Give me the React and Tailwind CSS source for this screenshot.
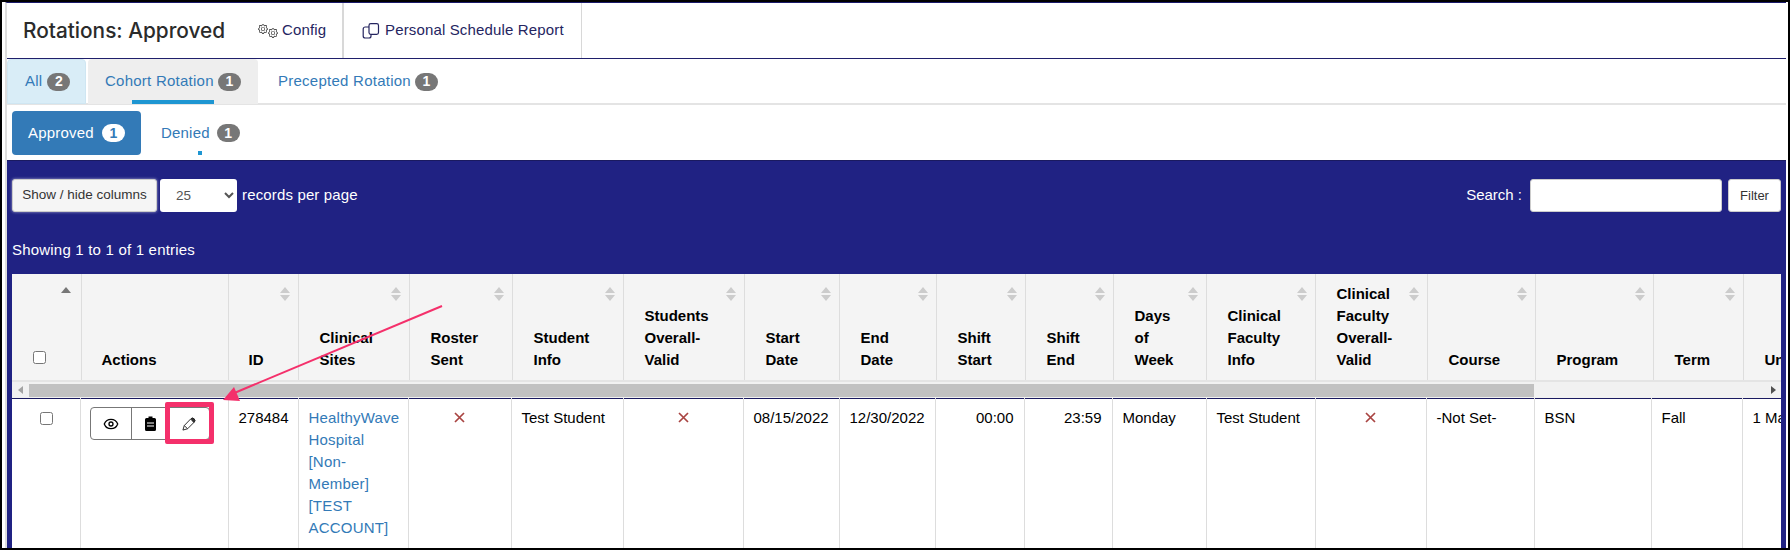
import React from "react";
import { Eye } from "lucide-react";
import { BsGear } from "react-icons/bs";

const headerCols = [
  { width: "w-[69px]", lines: [], checkbox: true },
  { width: "w-[147px]", lines: ["Actions"], noSort: true },
  { width: "w-[70px]", lines: ["ID"] },
  { width: "w-[111px]", lines: ["Clinical", "Sites"] },
  { width: "w-[103px]", lines: ["Roster", "Sent"] },
  { width: "w-[111px]", lines: ["Student", "Info"] },
  { width: "w-[121px]", lines: ["Students", "Overall-", "Valid"] },
  { width: "w-[95px]", lines: ["Start", "Date"] },
  { width: "w-[97px]", lines: ["End", "Date"] },
  { width: "w-[89px]", lines: ["Shift", "Start"] },
  { width: "w-[88px]", lines: ["Shift", "End"] },
  { width: "w-[93px]", lines: ["Days", "of", "Week"] },
  { width: "w-[109px]", lines: ["Clinical", "Faculty", "Info"] },
  { width: "w-[112px]", lines: ["Clinical", "Faculty", "Overall-", "Valid"] },
  { width: "w-[108px]", lines: ["Course"] },
  { width: "w-[118px]", lines: ["Program"] },
  { width: "w-[90px]", lines: ["Term"] },
  { width: "w-[120px]", lines: ["Unit"] },
];

const bodyWidths = [
  "w-[68px]",
  "w-[148px]",
  "w-[70px]",
  "w-[110px]",
  "w-[103px]",
  "w-[112px]",
  "w-[120px]",
  "w-[96px]",
  "w-[96px]",
  "w-[89px]",
  "w-[88px]",
  "w-[94px]",
  "w-[109px]",
  "w-[111px]",
  "w-[108px]",
  "w-[117px]",
  "w-[91px]",
  "w-[120px]",
];

const Badge = ({ children, light }) => (
  <span
    className={`inline-flex h-[18px] w-[23px] items-center justify-center rounded-full text-[14px] font-bold tracking-normal ${
      light ? "bg-white text-[#337ab7]" : "bg-[#777] text-white"
    }`}
  >
    {children}
  </span>
);

const SortIcon = ({ active }) =>
  active ? (
    <svg className="absolute right-[10px] top-[13px] h-[6px] w-[10px]" viewBox="0 0 10 6">
      <path d="M5 0 L10 6 L0 6 Z" fill="#777" />
    </svg>
  ) : (
    <svg className="absolute right-[8px] top-[13px] h-[14px] w-[10px]" viewBox="0 0 10 14">
      <path d="M5 0 L10 6 L0 6 Z M0 8 L10 8 L5 14 Z" fill="#ccc" />
    </svg>
  );

const RemoveMark = () => (
  <svg className="mx-auto mt-[5px] block h-[11px] w-[11px]" viewBox="0 0 11 11">
    <path d="M1 1 L10 10 M10 1 L1 10" stroke="#a94442" strokeWidth="1.7" />
  </svg>
);

const CopyIcon = () => (
  <svg className="h-[16px] w-[18px]" viewBox="0 0 18 16" fill="none" stroke="#25255f" strokeWidth="1.2">
    <rect x="7" y="0.7" width="9.5" height="10.6" rx="1.8" />
    <path d="M7 4 H3.2 A2 2 0 0 0 1.2 6 V13 A2 2 0 0 0 3.2 15 H7 A2 2 0 0 0 9 13 V11.5" />
  </svg>
);

const ClipboardIcon = () => (
  <svg className="h-[15px] w-[11px]" viewBox="0 0 11 15">
    <path
      d="M3.5 0.5 H7.5 V2 H9.5 A1.5 1.5 0 0 1 11 3.5 V13.5 A1.5 1.5 0 0 1 9.5 15 H1.5 A1.5 1.5 0 0 1 0 13.5 V3.5 A1.5 1.5 0 0 1 1.5 2 H3.5 Z"
      fill="#000"
    />
    <path d="M2 7 H9 M2 10 H9" stroke="#fff" strokeWidth="1" />
  </svg>
);

const PenIcon = () => (
  <svg className="h-[14px] w-[14px]" viewBox="0 0 15 15" fill="none" stroke="#222" strokeWidth="1">
    <path d="M1 14 L2.4 9.2 L9.4 2 Q11.4 0.4 13 2 Q14.6 3.6 13 5.6 L6 12.6 Z" fill="#fff" />
    <path d="M10.4 1.4 Q11.6 0.8 13 2 Q14.4 3.4 13.4 5 L12.6 5.8 L9.8 2.6 Z" fill="#333" />
    <path d="M2.4 9.2 L6 12.6" />
  </svg>
);

const App = () => {
  return (
    <div className="relative h-[550px] w-[1790px] overflow-hidden border-2 border-black bg-white font-['Liberation_Sans',sans-serif] text-[15px] text-black">
      <div className="ml-[3px] mr-[2px] flex h-full flex-col border-l-2 border-t border-l-[#ddd] border-t-[#1a1a6b]">
        {/* Header */}
        <div className="flex h-[56px] shrink-0 items-center border-b border-[#1f1f6b] tracking-[0.15px] text-[#25255f]">
          <h1 className="ml-[16px] w-[235px] font-['Inter',sans-serif] text-[20.8px] font-medium tracking-normal text-[#2b2b2b]">
            Rotations: Approved
          </h1>
          <div className="flex h-full w-[86px] items-center gap-[4px] border-r-2 border-[#d8d8d8]">
            <span className="flex">
              <BsGear className="h-[10px] w-[10px] -translate-y-[2px] text-[#222]" />
              <BsGear className="h-[10px] w-[10px] translate-y-[2px] text-[#222]" />
            </span>
            <span>Config</span>
          </div>
          <div className="flex h-full w-[238px] items-center gap-[5px] border-r border-[#d8d8d8] pl-[18px]">
            <CopyIcon />
            <span>Personal Schedule Report</span>
          </div>
        </div>

        {/* Tabs */}
        <div className="flex h-[46px] shrink-0 border-b-2 border-[#e4e4e4] tracking-[0.25px] text-[#337ab7]">
          <div className="flex h-[45px] w-[79px] items-center gap-[5px] rounded-t border border-[#cfe6f2] bg-[#d9edf7] pl-[17px]">
            All <Badge>2</Badge>
          </div>
          <div className="relative ml-[2px] flex h-[45px] w-[170px] items-center gap-[4px] rounded-t bg-[#eee] pl-[17px]">
            Cohort Rotation <Badge>1</Badge>
            <div className="absolute bottom-0 left-[44px] h-[4px] w-[82px] bg-[#1e96d2]"></div>
          </div>
          <div className="ml-[20px] flex h-[45px] items-center gap-[4px]">
            Precepted Rotation <Badge>1</Badge>
          </div>
        </div>

        {/* Pills */}
        <div className="flex h-[55px] shrink-0 pl-[5px] pt-[6px] tracking-[0.2px]">
          <div className="flex h-[44px] w-[129px] items-center gap-[8px] rounded bg-[#337ab7] pl-[16px] text-white">
            Approved <Badge light>1</Badge>
          </div>
          <div className="relative ml-[20px] flex h-[44px] items-center gap-[7px] text-[#337ab7]">
            Denied <Badge>1</Badge>
            <div className="absolute bottom-0 left-[37px] h-[4px] w-[4px] bg-[#1e96d2]"></div>
          </div>
        </div>

        {/* Panel */}
        <div className="min-h-0 flex-1 overflow-hidden border-t border-[#1a1a60] bg-[#202283] px-[5px]">
          <div className="mt-[18px] flex h-[33px] items-center text-white">
            <button className="h-[33px] w-[145px] rounded-[3px] border border-[#ccc] bg-[#f5f5f5] text-[13.5px] text-[#333] shadow-[0_0_3px_rgba(255,255,255,0.6)]">
              Show / hide columns
            </button>
            <select className="ml-[3px] h-[33px] w-[77px] rounded-[3px] bg-white pl-[12px] text-[13.5px] text-[#555]">
              <option>25</option>
            </select>
            <span className="ml-[5px] tracking-[0.15px]">records per page</span>
            <span className="ml-auto">Search :</span>
            <input className="ml-[8px] h-[33px] w-[192px] rounded-[3px] border border-[#ccc] bg-white" />
            <button className="ml-[6px] h-[33px] w-[53px] rounded-[3px] border border-[#ccc] bg-white text-[13px] text-[#333]">
              Filter
            </button>
          </div>
          <div className="mt-[27px] h-[35px] tracking-[0.2px] text-white">Showing 1 to 1 of 1 entries</div>

          {/* Table */}
          <div className="overflow-hidden bg-white">
            <table className="w-[1851px] table-fixed border-collapse bg-[#f4f4f4]">
              <colgroup>
                {headerCols.map((col, idx) => (
                  <col key={idx} className={col.width} />
                ))}
              </colgroup>
              <thead>
                <tr className="h-[106px]">
                  {headerCols.map((col, idx) => (
                    <th
                      key={idx}
                      className={`relative border-r border-[#ddd] pb-[9px] text-left align-bottom text-[15px] font-bold leading-[22px] ${
                        idx < 3 ? "pl-[20px]" : "pl-[21px]"
                      }`}
                    >
                      {col.checkbox && <input type="checkbox" className="mb-[7px] ml-[1px] block h-[13px] w-[13px]" />}
                      {col.lines.map((line, i) => (
                        <div key={i}>{line}</div>
                      ))}
                      {!col.noSort && <SortIcon active={col.checkbox} />}
                    </th>
                  ))}
                </tr>
              </thead>
            </table>

            {/* Scrollbar */}
            <div className="flex h-[18px] items-center border-t-2 border-[#e4e4e4] bg-[#f1f1f1]">
              <svg className="ml-[6px] h-[8px] w-[5px]" viewBox="0 0 5 8">
                <path d="M5 0 V8 L0 4 Z" fill="#a3a3a3" />
              </svg>
              <div className="ml-[6px] h-[13px] w-[1505px] bg-[#c1c1c1]"></div>
              <svg className="ml-auto mr-[5px] h-[8px] w-[5px]" viewBox="0 0 5 8">
                <path d="M0 0 V8 L5 4 Z" fill="#505050" />
              </svg>
            </div>

            <table className="w-[1850px] table-fixed border-collapse border-t border-[#1a1a60] bg-white leading-[22px]">
              <colgroup>
                {bodyWidths.map((w, idx) => (
                  <col key={idx} className={w} />
                ))}
              </colgroup>
              <tbody>
                <tr className="h-[150px] [&>td]:border-r [&>td]:border-[#ddd] [&>td]:px-[10px] [&>td]:pt-[8px] [&>td]:align-top">
                  <td>
                    <input type="checkbox" className="ml-[18px] mt-[5px] block h-[13px] w-[13px]" />
                  </td>
                  <td className="relative">
                    <div className="-ml-[1px] flex h-[33px] w-[120px] rounded border border-[#777]">
                      <div className="flex w-[41px] items-center justify-center border-r border-[#777]">
                        <Eye className="h-[16px] w-[16px]" strokeWidth={2} />
                      </div>
                      <div className="flex w-[38px] items-center justify-center">
                        <ClipboardIcon />
                      </div>
                      <div className="flex w-[39px] items-center justify-center">
                        <PenIcon />
                      </div>
                    </div>
                    <div className="absolute left-[84px] top-[3px] h-[42px] w-[49px] rounded-[2px] border-[5px] border-[#f4306b]"></div>
                  </td>
                  <td className="text-right">278484</td>
                  <td className="tracking-[0.2px] text-[#337ab7]">
                    HealthyWave Hospital [Non-Member] [TEST ACCOUNT]
                  </td>
                  <td>
                    <RemoveMark />
                  </td>
                  <td>Test Student</td>
                  <td>
                    <RemoveMark />
                  </td>
                  <td className="text-right">08/15/2022</td>
                  <td className="text-right">12/30/2022</td>
                  <td className="text-right">00:00</td>
                  <td className="text-right">23:59</td>
                  <td>Monday</td>
                  <td className="whitespace-nowrap">Test Student</td>
                  <td>
                    <RemoveMark />
                  </td>
                  <td>-Not Set-</td>
                  <td>BSN</td>
                  <td>Fall</td>
                  <td className="whitespace-nowrap">1 Main</td>
                </tr>
              </tbody>
            </table>
          </div>
        </div>
      </div>

      {/* Callout arrow */}
      <svg className="pointer-events-none absolute left-[-2px] top-[-2px] h-[550px] w-[1790px]" viewBox="0 0 1790 550">
        <path d="M442 306 L232 394" stroke="#f4306b" strokeWidth="2" />
        <path d="M223 400 L234 387 L240 401 Z" fill="#f4306b" />
      </svg>
    </div>
  );
};

export default App;
